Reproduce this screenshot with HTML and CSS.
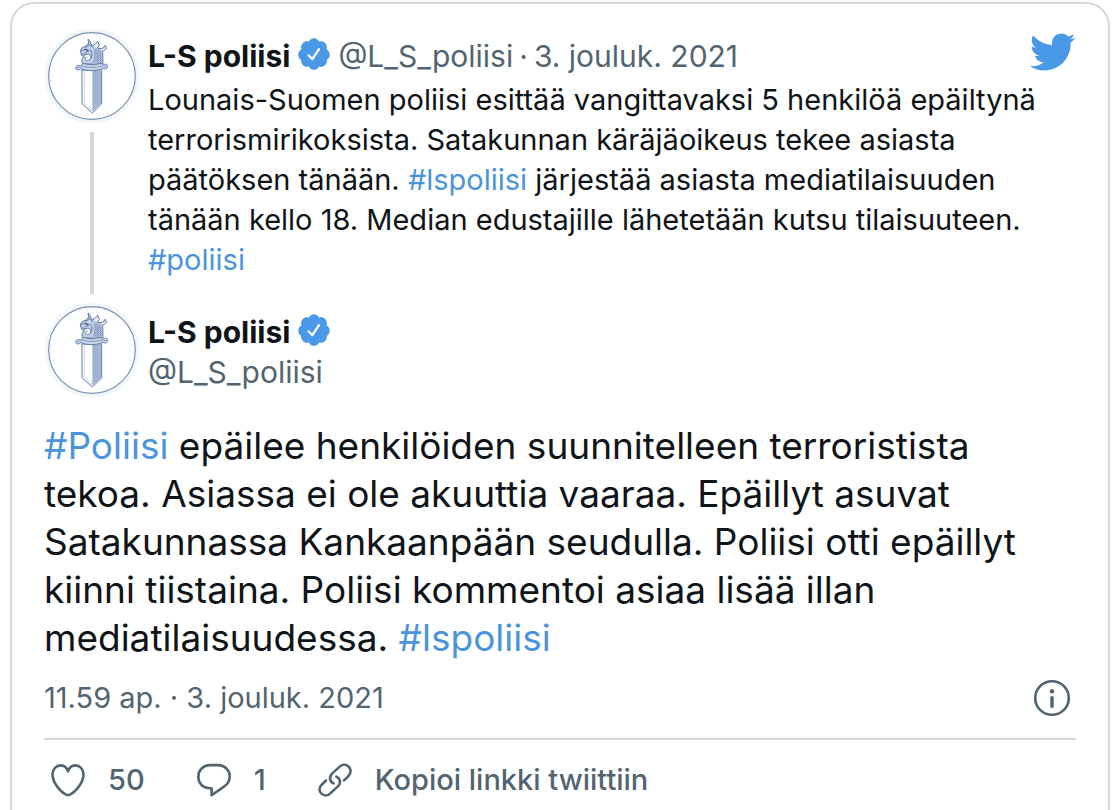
FILE: index.html
```html
<!DOCTYPE html>
<html lang="fi">
	<head>
		<meta charset="UTF-8">
		<meta name="viewport" content="width=device-width, initial-scale=1">
		<title>L-S poliisi</title>
		<link rel="stylesheet" href="styles.css">
	</head>
	<body>
		<!-- shared drawings -->
		<svg class="sprite" width="0" height="0" aria-hidden="true">
			<defs>
				<pattern id="hatch" width="6" height="6" patternUnits="userSpaceOnUse">
					<rect width="6" height="6" fill="#b4c2da"/>
					<path d="M0 0h3v3h-3zM3 3h3v3h-3z" fill="#8fa3c7"/>
				</pattern>
				<symbol id="sword" viewBox="12 12 288 288">
					<circle cx="156" cy="156" r="142" fill="#f3f6f8"/>
					<circle cx="156" cy="156" r="130" fill="#fff" stroke="#7b90b4" stroke-width="3.5"/>
					<g stroke="#5f7bad" stroke-width="3" stroke-linejoin="round" stroke-linecap="round">
						<path d="M127 138h58v102l-28 27-30-27z" fill="#fff"/>
						<path d="M157 140h26v99l-26 25z" fill="url(#hatch)" stroke="none"/>
						<path d="M133 143v94l24 23M180 143v94" fill="none" stroke="#b5c2da" stroke-width="2"/>
						<path d="M127 118c-3-12 0-17 6-20l-8-3-4-15 5-9 14-6 9-12 5 10 14 2 5 7 10 3 5 8 1 37z" fill="#c3cfe2"/>
						<path d="M160 72l22 8 5 36h-31c9-10 10-29 4-44z" fill="url(#hatch)" stroke="none"/>
						<path d="M132 97c4-8 16-9 20-1 3 9-5 15-12 13-7-2-5-9 1-9" fill="#fff"/>
						<path d="M122 80l14-4 11 5-12 5M126 90l12 2M150 106c7-8 8-18 1-28" fill="none"/>
						<path d="M164 80v30M173 82v30M182 84v28" fill="none" stroke="#7f96bf" stroke-width="2"/>
						<path d="M136 70l13-6 9 6M147 62l-3-17 5 4 4 13M160 65l13-13 5 13-7 8M177 75l13-3 5-8 5 9-10 8" fill="#e6ecf5"/>
						<path d="M136 76l7 3" stroke="#3f5f98" stroke-width="4"/>
						<path d="M130 119q27 8 53-1l8 5c5-5 13-2 12 4 0 7-8 10-13 6-20 9-47 9-69 1-5 7-14 4-14-2 0-7 8-11 13-5z" fill="#c9d4e6"/>
						<path d="M124 126q31 9 64 0M112 131h5M193 127l5 1" fill="none" stroke-width="2"/>
					</g>
				</symbol>
				<symbol id="verified" viewBox="0 0 24 24">
					<path fill="#4a99e9" d="M22.5 12.5c0-1.58-.875-2.95-2.148-3.6.154-.435.238-.905.238-1.4 0-2.21-1.71-3.998-3.818-3.998-.47 0-.92.084-1.336.25C14.818 2.415 13.51 1.5 12 1.5s-2.816.917-3.437 2.25c-.415-.165-.866-.25-1.336-.25-2.11 0-3.818 1.79-3.818 4 0 .494.083.964.237 1.4-1.272.65-2.147 2.018-2.147 3.6 0 1.495.782 2.798 1.942 3.486-.02.17-.032.34-.032.514 0 2.21 1.708 4 3.818 4 .47 0 .92-.086 1.335-.25.62 1.334 1.926 2.25 3.437 2.25 1.512 0 2.818-.916 3.437-2.25.415.163.865.248 1.336.248 2.11 0 3.818-1.79 3.818-4 0-.174-.012-.344-.033-.513 1.158-.687 1.943-1.99 1.943-3.484z"/>
					<path fill="none" stroke="#fff" stroke-width="1.5" stroke-linecap="round" stroke-linejoin="round" d="M8.4 13l2.5 2.4 4.4-6.6"/>
				</symbol>
			</defs>
		</svg>

		<main class="card">
			<article class="tweet parent">
				<div class="side">
					<svg class="avatar"><use href="#sword"/></svg>
					<span class="thread"></span>
				</div>
				<div class="content">
					<div class="author">
						<a class="name" href="#">L-S poliisi</a>
						<svg class="badge"><use href="#verified"/></svg>
						<a class="meta" href="#">@L_S_poliisi</a>
						<span class="dot">·</span>
						<a class="meta" href="#">3. jouluk. 2021</a>
					</div>
					<p class="text">Lounais-Suomen poliisi esittää vangittavaksi 5 henkilöä epäiltynä<br>
					terrorismirikoksista. Satakunnan käräjäoikeus tekee asiasta<br>
					päätöksen tänään. <a href="#">#lspoliisi</a> järjestää asiasta mediatilaisuuden<br>
					tänään kello 18. Median edustajille lähetetään kutsu tilaisuuteen.<br>
					<a href="#">#poliisi</a></p>
				</div>
				<a class="logo" href="#" aria-label="Twitter">
					<svg viewBox="0 0 24 24" width="48" height="48"><path fill="#4a99e9" d="M23.643 4.937c-.835.37-1.732.62-2.675.733.962-.576 1.7-1.49 2.048-2.578-.9.534-1.897.922-2.958 1.13-.85-.904-2.06-1.47-3.4-1.47-2.572 0-4.658 2.086-4.658 4.66 0 .364.042.718.12 1.06-3.873-.195-7.304-2.05-9.602-4.868-.4.69-.63 1.49-.63 2.342 0 1.616.823 3.043 2.072 3.878-.764-.025-1.482-.234-2.11-.583v.06c0 2.257 1.605 4.14 3.737 4.568-.392.106-.803.162-1.227.162-.3 0-.593-.028-.877-.082.593 1.85 2.313 3.198 4.352 3.234-1.595 1.25-3.604 1.995-5.786 1.995-.376 0-.747-.022-1.112-.065 2.062 1.323 4.51 2.093 7.14 2.093 8.57 0 13.255-7.098 13.255-13.254 0-.2-.005-.402-.014-.602.91-.658 1.7-1.477 2.323-2.41z"/></svg>
				</a>
			</article>

			<article class="main-tweet">
				<div class="tweet">
					<svg class="avatar"><use href="#sword"/></svg>
					<div class="content">
						<div class="author">
							<a class="name" href="#">L-S poliisi</a>
							<svg class="badge"><use href="#verified"/></svg>
						</div>
						<div class="author">
							<a class="meta" href="#">@L_S_poliisi</a>
						</div>
					</div>
				</div>
				<p class="big-text"><a href="#">#Poliisi</a> epäilee henkilöiden suunnitelleen terroristista<br>
				tekoa. Asiassa ei ole akuuttia vaaraa. Epäillyt asuvat<br>
				Satakunnassa Kankaanpään seudulla. Poliisi otti epäillyt<br>
				kiinni tiistaina. Poliisi kommentoi asiaa lisää illan<br>
				mediatilaisuudessa. <a href="#">#lspoliisi</a></p>
				<div class="info-row">
					<a class="meta" href="#">11.59 ap. · 3. jouluk. 2021</a>
					<button class="info" type="button" aria-label="Info">
						<svg viewBox="0 0 40 40" width="40" height="40">
							<circle cx="20" cy="20" r="16.8" fill="none" stroke="#536471" stroke-width="2.6"/>
							<circle cx="20" cy="13.3" r="2.2" fill="#536471"/>
							<path d="M20 19.6v8.6" stroke="#536471" stroke-width="3.4" stroke-linecap="round"/>
						</svg>
					</button>
				</div>
				<div class="actions">
					<button type="button">
						<svg viewBox="0 0 40 40"><path d="M20 35.2C15.5 34.5 4.5 24.5 4.5 14.3C4.5 9 8.4 5.4 12.6 5.4C16.5 5.4 19 8.4 20 11.3C21 8.4 23.5 5.4 27.4 5.4C31.6 5.4 35.5 9 35.5 14.3C35.5 24.5 24.5 34.5 20 35.2z"/></svg>
						<span>50</span>
					</button>
					<button type="button">
						<svg viewBox="0 0 40 40"><path d="M17.6 28.2H15.5C9 28.2 4.3 23 4.3 16.7C4.3 10.3 9.3 5.1 15.7 5.1H24C30.6 5.1 35.7 10.2 35.7 16.6C35.7 20.8 33.5 24.5 30 26.6L17.6 35.3V28.2z"/></svg>
						<span>1</span>
					</button>
					<button type="button">
						<svg viewBox="0 0 40 40"><path d="M11 20.5L6.7 24.7C3.7 27.8 3.8 31.4 6.4 33.6C9 36 12.7 35.800 15 33.6L22.700 26.6C26.3 23.2 25.5 18.5 21.3 16.6"/><path d="M29 20.4L33.3 16.2C36.3 13.2 36.2 9 33.6 6.5C31 4 27.3 4.2 25 6.4L17.3 13.4C13.7 16.8 14.5 21.5 18.7 23.4"/></svg>
						<span>Kopioi linkki twiittiin</span>
					</button>
				</div>
			</article>
		</main>
	</body>
</html>
```

FILE: styles.css
```css
*{
	margin: 0;
	padding: 0;
	box-sizing: border-box;
}

body{
	padding: 2px 2px 0 10px;
	background-color: #fff;
	color: #0f1419;
	font-family: Inter, "Liberation Sans", sans-serif;
	font-size: 29px;
	line-height: 40px;
}

a{
	color: #4a94dc;
	text-decoration: none;
}

button{
	border: none;
	background: none;
	color: inherit;
	font: inherit;
	cursor: pointer;
}

svg{
	display: block;
	flex: none;
}

.sprite{
	position: absolute;
}

/* the card runs on past the bottom of the window */
.card{
	min-height: calc(100vh - 2px);
	padding: 24px 32px 0;
	border: 2px solid #cfd9de;
	border-bottom: none;
	border-radius: 24px 24px 0 0;
}

.tweet{
	display: flex;
	gap: 8px;
}

.parent{
	margin-bottom: 8px;
}

.side{
	display: flex;
	flex-direction: column;
	align-items: center;
	gap: 8px;
}

.avatar{
	width: 96px;
	height: 96px;
}

.thread{
	flex: 1;
	width: 4px;
	background-color: #cfd9de;
}

.content{
	flex: 1;
	padding-top: 8px;
}

.parent .content{
	padding-bottom: 14px;
}

.main-tweet .content{
	padding-top: 10px;
}

.author{
	display: flex;
	align-items: center;
	gap: 6px;
	font-size: 30px;
	white-space: nowrap;
}

.name{
	color: #0f1419;
	font-weight: 700;
}

.badge{
	width: 36px;
	height: 36px;
	margin-bottom: 4px;
}

.meta,
.dot{
	color: #536471;
}

.parent .text{
	margin-top: 4px;
	margin-right: -48px;
}

.logo{
	width: 48px;
	height: 48px;
}

.big-text{
	margin-top: 24px;
	font-size: 37px;
	line-height: 48px;
}

.info-row{
	display: flex;
	align-items: center;
	justify-content: space-between;
	margin-top: 16px;
	padding-bottom: 20px;
	border-bottom: 2px solid #cfd9de;
}

.info{
	width: 48px;
	height: 40px;
	padding: 0 4px;
}

.actions{
	display: flex;
	gap: 49px;
	padding: 20px 4px 8px;
	color: #536471;
	font-weight: 500;
}

.actions button{
	display: flex;
	align-items: center;
	gap: 20px;
}

.actions svg{
	width: 40px;
	height: 40px;
	fill: none;
	stroke: #536471;
	stroke-width: 2.6;
	stroke-linecap: round;
	stroke-linejoin: round;
}
```
